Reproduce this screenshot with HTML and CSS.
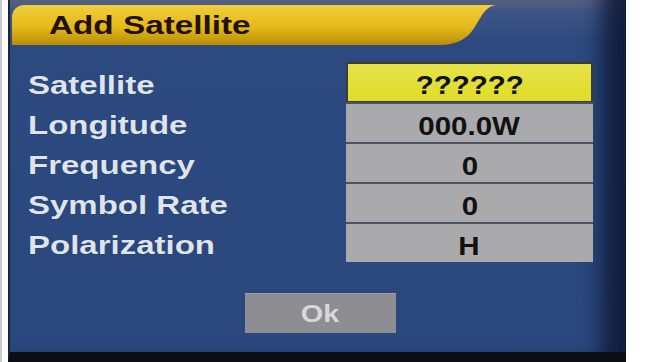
FILE: index.html
```html
<!DOCTYPE html>
<html>
<head>
<meta charset="utf-8">
<link rel="stylesheet" href="styles.css">
</head>
<body>
<div class="frame">
  <div class="panel">
    <div class="header">
      <div class="tab"><span class="title">Add Satellite</span></div>
      <svg class="curve" width="58" height="40" viewBox="0 0 58 40">
        <defs>
          <linearGradient id="yg" x1="0" y1="0" x2="0" y2="1">
            <stop offset="0" stop-color="#f0cf3a"/>
            <stop offset="0.55" stop-color="#e6b81a"/>
            <stop offset="1" stop-color="#b88e08"/>
          </linearGradient>
        </defs>
        <path d="M0,0 H58 C48,1 44,10 38,20 C31,32 22,40 0,40 Z" fill="url(#yg)"/>
      </svg>
    </div>
    <div class="form">
      <div class="label"><span>Satellite</span></div>
      <div class="value selected"><span>??????</span></div>
      <div class="label"><span>Longitude</span></div>
      <div class="value"><span>000.0W</span></div>
      <div class="label"><span>Frequency</span></div>
      <div class="value"><span>0</span></div>
      <div class="label"><span>Symbol Rate</span></div>
      <div class="value"><span>0</span></div>
      <div class="label"><span>Polarization</span></div>
      <div class="value"><span>H</span></div>
    </div>
    <div class="ok"><span>Ok</span></div>
  </div>
</div>
</body>
</html>
```

FILE: styles.css
```css
html, body {
  margin: 0;
  padding: 0;
  background: #ffffff;
}
body {
  width: 649px;
  height: 362px;
  overflow: hidden;
  font-family: "Liberation Sans", Arial, sans-serif;
  font-weight: bold;
}
.frame {
  display: flex;
  height: 362px;
  padding-left: 6px;
  box-sizing: border-box;
  border-left: 2px solid #c8cacc;
}
.panel {
  width: 618px;
  height: 362px;
  box-sizing: border-box;
  border-left: 2px solid #1c2438;
  border-bottom: 10px solid #0d0e14;
  background: linear-gradient(180deg, #5e6a88 0px, #3e5584 12px, #2d4a80 40px, #2a487e 100%);
  box-shadow: inset -36px 0 22px -12px rgba(14, 24, 54, 0.9);
  display: flex;
  flex-direction: column;
  padding-top: 5px;
}
.header {
  display: flex;
  margin-left: 2px;
  height: 40px;
}
.tab {
  width: 426px;
  height: 40px;
  border-top-left-radius: 12px;
  background: linear-gradient(180deg, #f0cf3a 0%, #e6b81a 55%, #b88e08 100%);
  padding-left: 37px;
  box-sizing: border-box;
  line-height: 40px;
}
.curve {
  display: block;
}
.title {
  display: inline-block;
  font-size: 26px;
  color: #22120a;
  transform: scaleX(1.28);
  transform-origin: left center;
}
.form {
  margin-top: 17px;
  padding-left: 18px;
  display: grid;
  grid-template-columns: 318px 247px;
  grid-auto-rows: 40px;
}
.label {
  padding-top: 3px;
  line-height: 40px;
  box-sizing: border-box;
  font-size: 25px;
  color: #dfe3ec;
  white-space: nowrap;
}
.label span {
  display: inline-block;
  transform: scaleX(1.32);
  transform-origin: left center;
  text-shadow: 0 0 1px rgba(0,0,0,0.4);
}
.value {
  background: #aaaaac;
  border-top: 2px solid #4c5462;
  box-sizing: border-box;
  text-align: center;
  line-height: 38px;
  padding-top: 3px;
  font-size: 25px;
  color: #111111;
}
.value span {
  display: inline-block;
  transform: scaleX(1.18);
}
.value.selected {
  background: linear-gradient(180deg, #e4e24a 0%, #e2dc28 100%);
  border: 2px solid #3a3e30;
  border-bottom-width: 1px;
  line-height: 36px;
}
.ok {
  margin-top: 31px;
  margin-left: 235px;
  width: 151px;
  height: 40px;
  background: #8e8e92;
  border-top: 1px solid #a0a0a4;
  box-sizing: border-box;
  text-align: center;
  line-height: 40px;
  font-size: 24px;
  color: #d8d8da;
}
.ok span {
  display: inline-block;
  transform: scaleX(1.2);
}
```
